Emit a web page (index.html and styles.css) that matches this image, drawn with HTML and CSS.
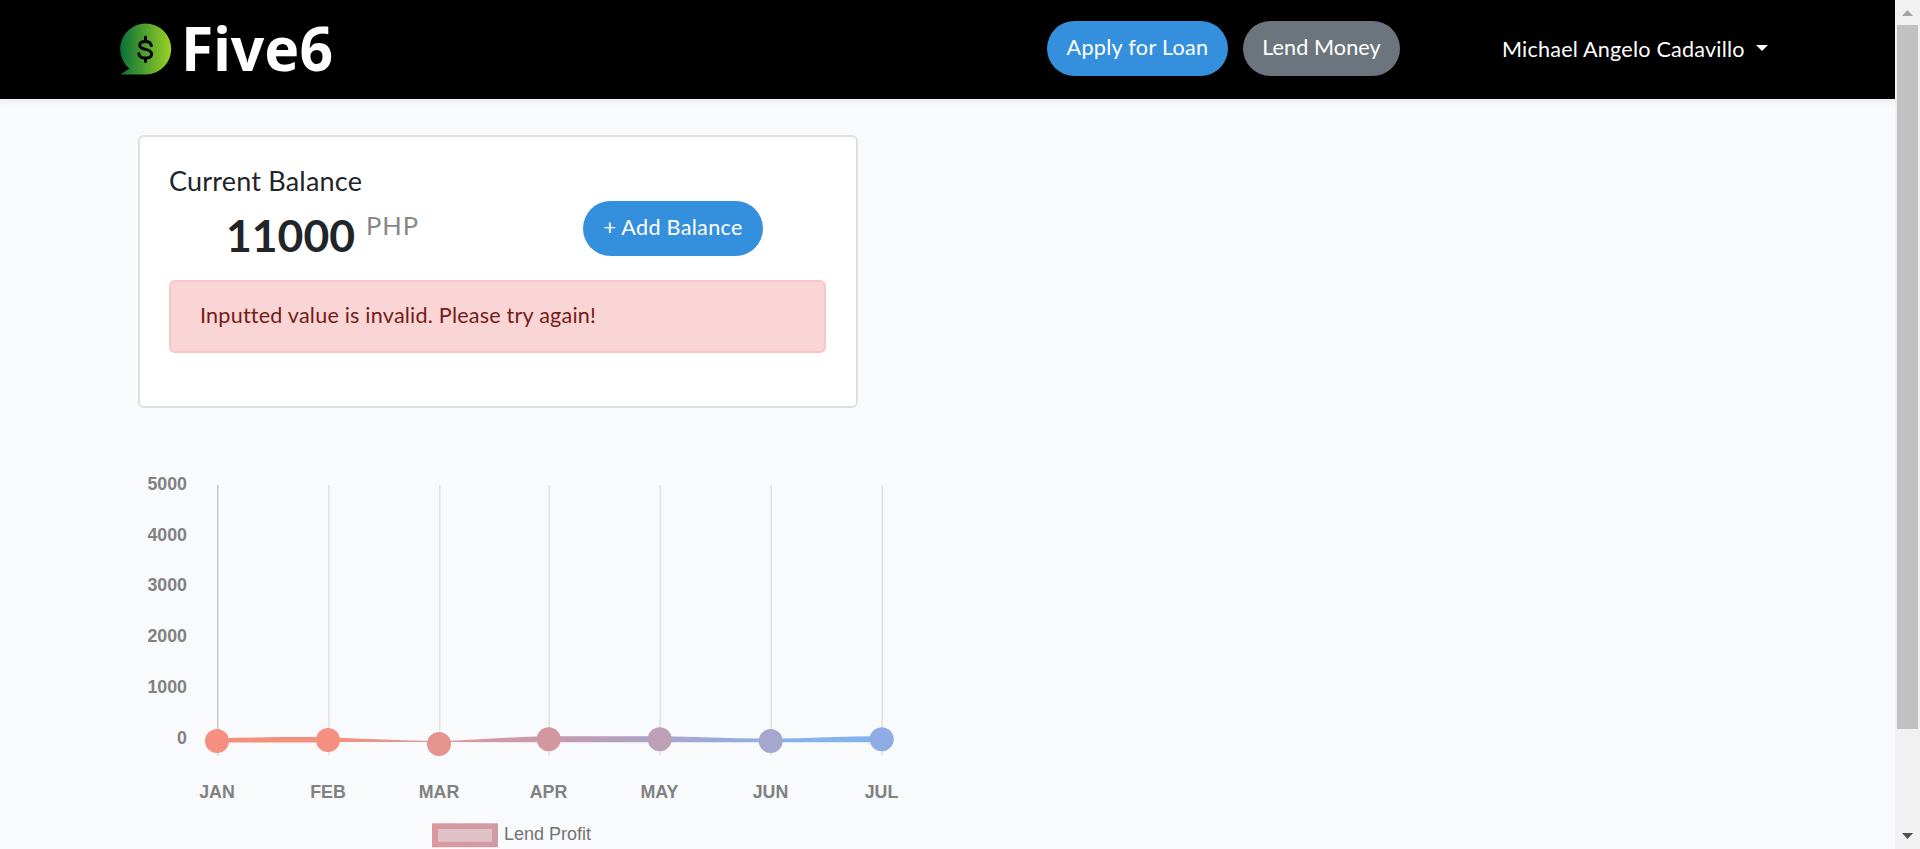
FILE: index.html
```html
<!DOCTYPE html>
<html lang="en">
<head>
<meta charset="utf-8">
<title>Five6</title>
<link rel="stylesheet" href="styles.css">
</head>
<body>
<div class="page">
  <nav class="navbar">
    <svg class="brand" width="220" height="92" viewBox="0 0 220 92" role="img" aria-label="Five6">
      <defs><linearGradient id="leaf"><stop offset="0" stop-color="#087039"/><stop offset="1" stop-color="#9bd323"/></linearGradient></defs>
      <path fill="url(#leaf)" d="M25.700 23.500a25.500 25.500 0 0 1 0 51H.4l9-5.900A25.500 25.500 0 0 1 25.700 23.500z"/>
      <path class="dollar" transform="translate(0 20)" d="M25.500 17v4m0 17v3.500M31.400 25.600c-.6-2.700-2.600-4.200-5.900-4.200-3.600 0-5.800 1.500-5.800 3.900 0 2.600 2.200 3.300 5.800 4.100 4 .9 6.100 2 6.100 4.600 0 2.600-2.400 4.100-6.100 4.100-3.700 0-6.100-1.400-6.700-4.400"/>
      <text class="brand-name" x="61" y="71" textLength="152" lengthAdjust="spacingAndGlyphs">Five6</text>
    </svg>
    <div class="actions">
      <a class="btn primary loan">Apply for Loan</a>
      <a class="btn secondary">Lend Money</a>
    </div>
    <a class="user"><span class="user-name">Michael Angelo Cadavillo</span><span class="caret"></span></a>
  </nav>
  <main class="content">
    <section class="card">
      <h5 class="title">Current Balance</h5>
      <div class="balance">
        <div class="amount"><b>11000</b><span class="unit">PHP</span></div>
        <a class="btn primary add">+ Add Balance</a>
      </div>
      <div class="alert">Inputted value is invalid. Please try again!</div>
    </section>
    <svg class="chart" width="782" height="389" viewBox="130 460 782 389">
      <defs>
        <linearGradient id="stroke" gradientUnits="userSpaceOnUse" x1="217" x2="882" y1="0" y2="0">
          <stop offset="0" stop-color="#f4907f"/><stop offset=".17" stop-color="#f4907f"/><stop offset=".34" stop-color="#dc979a"/><stop offset=".5" stop-color="#c69bab"/><stop offset=".67" stop-color="#aaa5cb"/><stop offset=".84" stop-color="#8bb1e8"/><stop offset="1" stop-color="#80b3ef"/>
        </linearGradient>
        <linearGradient id="legend"><stop offset="0" stop-color="#d9989e"/><stop offset="1" stop-color="#cf9ba7"/></linearGradient>
      </defs>
      <path class="axis" d="M217.800 485V755.500"/>
      <path class="grid" d="M328.800 485V755.500M439.800 485V755.500M549.200 485V755.500M660.200 485V755.500M771.200 485V755.500M882.200 485V755.500"/>
      <path fill="url(#stroke)" d="M217 738.200C254 737.200 291 736.800 328 737.200C365 738.500 402 740.900 439 740.900C476 740.600 512 736.300 549 736.200H660C697 736.400 734 738.800 771 738.600C808 738.300 845 736.200 882 736.200V742.300H771L660 742.300H549L439 742H328V742.500H217z"/>
      <g>
        <circle cx="217" cy="741" r="12" fill="#f59080"/>
        <circle cx="328" cy="740.100" r="12" fill="#f59080"/>
        <circle cx="439" cy="744" r="12" fill="#e6938d"/>
        <circle cx="548.700" cy="739.200" r="12" fill="#d3979f"/>
        <circle cx="659.700" cy="739.200" r="12" fill="#bda0b6"/>
        <circle cx="770.700" cy="741.100" r="12" fill="#a6a7cf"/>
        <circle cx="881.700" cy="739.200" r="12" fill="#8fade4"/>
      </g>
      <g class="ticks y">
        <text x="187" y="489.700">5000</text><text x="187" y="540.700">4000</text><text x="187" y="591">3000</text><text x="187" y="642">2000</text><text x="187" y="693">1000</text><text x="187" y="743.700">0</text>
      </g>
      <g class="ticks x">
        <text x="217" y="797.500">JAN</text><text x="328" y="797.500">FEB</text><text x="439" y="797.500">MAR</text><text x="548.500" y="797.500">APR</text><text x="659.500" y="797.500">MAY</text><text x="770.500" y="797.500">JUN</text><text x="881.500" y="797.500">JUL</text>
      </g>
      <path fill="url(#legend)" d="M432 823.300h66v24h-66z"/>
      <path class="legend-fill" d="M438 829h54v12.700h-54z"/>
      <text class="legend-text" x="504" y="839.700" textLength="87">Lend Profit</text>
    </svg>
  </main>
</div>
<div class="scrollbar">
  <svg width="25" height="25"><path fill="#a3a3a3" d="M12.500 10L18 16H7z"/></svg>
  <div class="thumb"></div>
  <svg class="down" width="25" height="25"><path fill="#505050" d="M7 9h11l-5.500 6z"/></svg>
</div>
</body>
</html>
```
FILE: styles.css
```css
* { box-sizing: border-box; }
body { margin: 0; height: 849px; overflow: hidden; display: flex; background: #f8fafc; font-family: Lato, "Open Sans", sans-serif; font-size: 21.6px; letter-spacing: .2px; color: #212529; }
.page { width: 1895px; height: 849px; overflow: hidden; }
.navbar { height: 99px; background: #000; display: flex; align-items: flex-start; padding-left: 120px; box-shadow: 0 3px 6px rgba(0, 0, 0, .05); color: #fff; }
.brand { flex: none; }
.brand-name { font: 700 61.500px "Noto Sans", sans-serif; letter-spacing: 0; fill: #fff; }
.dollar { fill: none; stroke: #000; stroke-width: 3; stroke-linecap: round; }
.actions { display: flex; gap: 15px; margin: 21px 0 0 707px; }
.btn { height: 55px; line-height: 53px; border-radius: 28px; color: #fff; text-align: center; white-space: nowrap; }
.primary { background: #3490dc; letter-spacing: .3px; }
.secondary { background: #6c757d; width: 157px; letter-spacing: .1px; }
.loan { width: 181px; }
.add { width: 180px; }
.user { display: flex; align-items: center; margin: 34px 0 0 102px; height: 30px; white-space: nowrap; }
.user-name { width: 242px; }
.caret { margin: -3px 0 0 12px; border: 6.500px solid transparent; border-top-color: #fff; border-bottom: 0; }
.content { padding: 36px 0 0 130px; }
.card { width: 720px; height: 273px; margin-left: 8px; border: 2px solid #dfdfdf; border-radius: 6px; background: #fff; padding: 27px 30px 0 29px; }
.title { margin: 0; height: 37px; line-height: 34px; font-size: 27px; font-weight: 400; }
.balance { display: flex; height: 55px; }
.amount { width: 414px; padding-left: 57px; display: flex; letter-spacing: 0; }
.amount b { font-size: 44.500px; line-height: 68px; }
.unit { margin-left: 11px; font-size: 25.500px; line-height: 48px; letter-spacing: .9px; color: #888; }
.alert { margin-top: 24px; height: 73px; line-height: 67px; padding-left: 29px; border: 2px solid #f7c6c5; border-radius: 6px; background: #f9d6d5; color: #761b18; }
.chart { display: block; margin-top: 52px; letter-spacing: 0; }
.axis { stroke: #bfc0c2; stroke-width: 1.300; }
.grid { fill: none; stroke: #dfe1e3; stroke-width: 1.500; }
.ticks { font: 700 17.800px "Liberation Sans", sans-serif; fill: #808182; }
.y { text-anchor: end; }
.x { text-anchor: middle; }
.legend-fill { fill: #e2c2c9; }
.legend-text { font: 18px "Liberation Sans", sans-serif; fill: #727374; }
.scrollbar { width: 25px; height: 849px; background: #f1f1f1; display: flex; flex-direction: column; }
.thumb { height: 704px; margin: 0 2px; background: #c1c1c1; }
.down { margin-top: auto; }
```
